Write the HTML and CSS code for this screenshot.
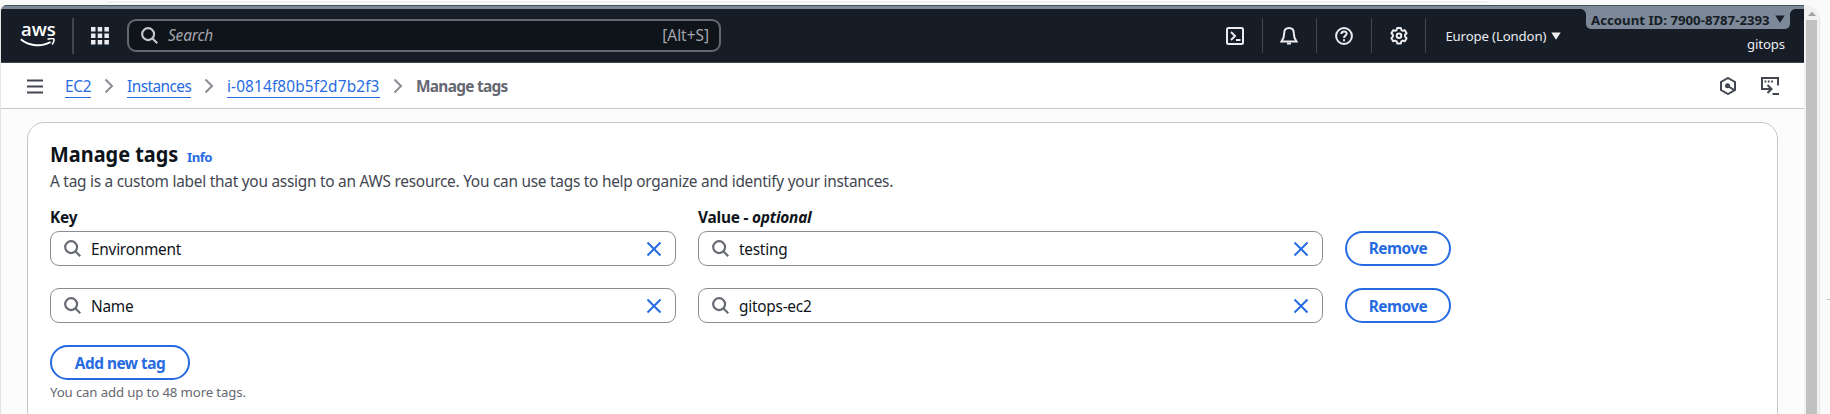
FILE: index.html
```
<!DOCTYPE html>
<html lang="en">
<head>
<meta charset="utf-8">
<title>Manage tags | EC2</title>
<link rel="stylesheet" href="styles.css">
</head>
<body>
<svg class="defs" width="0" height="0">
  <symbol id="search" viewBox="0 0 16 16"><circle cx="6.7" cy="6.7" r="5.6"/><path d="M10.8 10.8 15.3 15.3"/></symbol>
  <symbol id="close" viewBox="0 0 16 16"><path d="m1.5 1.5 13 13M14.5 1.5l-13 13"/></symbol>
  <symbol id="chevron" viewBox="0 0 10 16"><path d="m1.5 1.5 6.5 6.5-6.5 6.5"/></symbol>
  <symbol id="caret" viewBox="0 0 10 8"><path d="M.3 .5h9.4L5 7.7z"/></symbol>
</svg>
<div class="browser">
  <div class="toolbar"><div class="omnibox"></div></div>
  <div class="window">
    <div class="page">
      <header class="topnav">
        <div class="logo"><span class="logo-text">aws</span><svg width="36" height="9" viewBox="0 0 36 9"><path d="M.8 1.200C9 8.400 22 9 30.500 4" fill="none" stroke="#fff" stroke-width="2"/><path d="M27.500 1.300c3-.9 5.800-.9 6.300-.2.600.9-.3 4-1.800 5.400" fill="none" stroke="#fff" stroke-width="1.600"/></svg></div>
        <svg class="apps" width="18" height="18" viewBox="0 0 18 18"><path d="M0 0h4.500v4.500H0zM6.700 0h4.500v4.500H6.700zM13.400 0h4.500v4.500h-4.500zM0 6.500h4.500V11H0zM6.700 6.500h4.500V11H6.700zM13.400 6.500h4.500V11h-4.500zM0 13h4.500v4.500H0zM6.700 13h4.500v4.500H6.700zM13.400 13h4.500v4.500h-4.500z"/></svg>
        <div class="global-search">
          <svg class="icon" width="17" height="17"><use href="#search"/></svg>
          <span class="placeholder">Search</span><span class="shortcut">[Alt+S]</span>
        </div>
        <nav class="tools">
          <span class="tool"><svg width="18" height="18" viewBox="0 0 18 18"><rect x="1" y="1" width="16" height="16" rx="1.5"/><path d="m5 5 4 4-4 4M10 13h4.5"/></svg></span>
          <span class="tool"><svg width="18" height="18" viewBox="0 0 18 18"><path d="M9 1C5.800 1 4.200 3.300 4.200 6.200c0 4-.7 5.800-2.700 8.300h15c-2-2.500-2.700-4.300-2.700-8.300C13.800 3.300 12.200 1 9 1z"/><path d="M7 16.500h4"/></svg></span>
          <span class="tool"><svg width="18" height="18" viewBox="0 0 18 18"><circle cx="9" cy="9" r="7.900"/><path d="M6.300 7c.1-3.500 5.600-3.300 5.400-.2C11.600 8.700 9 8.600 9 11M9 12.300v1.900"/></svg></span>
          <span class="tool"><svg width="18" height="18" viewBox="0 0 18 18"><path d="m7.200 1h3.600l.6 2.100 1.300.7 2.100-.6 1.800 3-1.500 1.600v1.800l1.500 1.600-1.800 3-2.100-.6-1.300.7-.6 2.200H7.200l-.6-2.200-1.300-.7-2.100.6-1.800-3 1.500-1.600V7.800L1.400 6.200l1.800-3 2.100.6 1.300-.7z" stroke-linejoin="round"/><circle cx="9" cy="8.800" r="2.300"/></svg></span>
        </nav>
        <div class="region"><span>Europe (London)</span><svg width="10" height="8"><use href="#caret"/></svg></div>
        <div class="account"><div class="account-id"><span>Account ID: 7900-8787-2393</span><svg width="10" height="8"><use href="#caret"/></svg></div><div class="alias">gitops</div></div>
      </header>
      <div class="crumbbar">
        <svg class="menu" width="16" height="15" viewBox="0 0 16 15"><path d="M0 1.500h16M0 7.500h16M0 13.500h16"/></svg>
        <nav class="crumbs">
          <a class="c1">EC2</a><svg class="chev" width="10" height="16"><use href="#chevron"/></svg>
          <a class="c2">Instances</a><svg class="chev" width="10" height="16"><use href="#chevron"/></svg>
          <a class="c3">i-0814f80b5f2d7b2f3</a><svg class="chev" width="10" height="16"><use href="#chevron"/></svg>
          <b>Manage tags</b>
        </nav>
        <div class="side-tools">
          <svg width="18" height="18" viewBox="0 0 18 18"><path d="m9 1 7 4v8l-7 4-7-4V5z"/><circle cx="8.500" cy="8.800" r="1.500" fill="#424650"/><path d="m9 9 6 4"/></svg>
          <svg width="18" height="18" viewBox="0 0 18 18"><path d="M5.500 11.900H1V1h16v7.500M5 11.900h5M6.500 8l4 4-4 4M11.500 16.900H18"/><path d="M3.500 4.500h1.800M6.800 4.500h1.800M10.100 4.500h1.800" /></svg>
        </div>
      </div>
      <main class="card">
        <div class="title"><h1>Manage tags</h1><a>Info</a></div>
        <p class="desc">A tag is a custom label that you assign to an AWS resource. You can use tags to help organize and identify your instances.</p>
        <div class="tags">
          <label class="key-label">Key</label><label class="value-label">Value - <i>optional</i></label><span></span>
          <div class="field"><svg class="icon" width="17" height="17"><use href="#search"/></svg><span>Environment</span><svg class="clear" width="16" height="16"><use href="#close"/></svg></div>
          <div class="field"><svg class="icon" width="17" height="17"><use href="#search"/></svg><span>testing</span><svg class="clear" width="16" height="16"><use href="#close"/></svg></div>
          <button class="btn remove">Remove</button>
          <div class="field"><svg class="icon" width="17" height="17"><use href="#search"/></svg><span>Name</span><svg class="clear" width="16" height="16"><use href="#close"/></svg></div>
          <div class="field"><svg class="icon" width="17" height="17"><use href="#search"/></svg><span>gitops-ec2</span><svg class="clear" width="16" height="16"><use href="#close"/></svg></div>
          <button class="btn remove low">Remove</button>
        </div>
        <button class="btn add low">Add new tag</button>
        <p class="hint">You can add up to 48 more tags.</p>
      </main>
    </div>
    <div class="scrollbar"><svg width="8" height="5" viewBox="0 0 8 5"><path d="M0 5 4 .5 8 5z"/></svg><div class="thumb"></div></div>
  </div>
  <div class="handle"></div>
</div>
</body>
</html>
```
FILE: styles.css
```
* { box-sizing: border-box; }
body { margin: 0; background: #fafafa; font: 15.4px/22px "Noto Sans", sans-serif; color: #0f141a; overflow: hidden; }
svg { display: block; flex: none; fill: none; stroke: currentColor; stroke-width: 2; }
h1, p { margin: 0; }
.defs { position: absolute; }
.browser { width: 1830px; height: 414px; position: relative; overflow: hidden; }
.toolbar { height: 5px; padding-left: 107px; }
.omnibox { width: 1383px; height: 3px; background: #f1f1f1; border-top: 1px solid #fff; }
.window { width: 1820px; height: 420px; border: solid #e4e4e4; border-width: 0 1px; border-radius: 6px 16px 0 0; overflow: hidden; display: flex; }
.page { width: 1803px; flex: none; background: #fcfcfd; }
.topnav { height: 58px; background: linear-gradient(#424f5e 1px, #7d8998 1px, #7d8998 4px, #161d26 4px); padding-top: 4px; border-bottom: 1px solid #424650; display: flex; position: relative; color: #ebebf0; padding-left: 19px; }
.logo { width: 54px; height: 36px; margin-top: 9px; border-right: 2px solid #424650; color: #fff; flex: none; }
.logo-text { display: block; font: 600 18.500px/20px "Open Sans", sans-serif; height: 20px; padding: 1px 0 0 1px; }
.apps { margin: 18px 18px 0 17px; fill: #ebebf0; stroke: none; }
.global-search { width: 594px; height: 33px; margin-top: 10px; border: 2px solid #656871; border-radius: 9px; background: #0f141a; display: flex; align-items: center; padding: 0 9px 0 12px; color: #a4a4ad; }
.global-search .icon { color: #c6c6cd; margin-right: 10px; }
.placeholder { font-style: italic; letter-spacing: -.15px; }
.shortcut { margin-left: auto; margin-right: 1px; }
.tools { display: flex; margin: 9px 0 0 487px; height: 35px; }
.tool { width: 54.600px; display: grid; place-items: center; border-right: 1px solid #424650; }
.region { display: flex; align-items: center; height: 22px; margin: 16px 0 0 19px; font-size: 13.200px; white-space: nowrap; gap: 7px; }
.region span { letter-spacing: -.13px; width: 99px; }
.region svg, .account svg { fill: currentColor; stroke: none; }
.account { position: absolute; top: 4px; right: 14px; width: 204px; }
.account-id { height: 20px; border-radius: 0 0 5px 5px; background: #7d8998; color: #161d26; font-weight: 700; font-size: 13.200px; letter-spacing: .02px; display: flex; align-items: center; gap: 5px; padding-left: 5px; white-space: nowrap; line-height: 22px; }
.account-id span { padding-top: 1px; }
.account-id::before, .account-id::after { content: ""; position: absolute; top: 0; width: 5px; height: 5px; }
.account-id::before { left: -5px; background: radial-gradient(circle at 0 100%, transparent 4.500px, #7d8998 5px); }
.account-id::after { right: -5px; background: radial-gradient(circle at 100% 100%, transparent 4.500px, #7d8998 5px); }
.alias { text-align: right; font-size: 13.200px; letter-spacing: -.1px; padding: 4px 5px 0 0; }
.crumbbar { height: 46px; background: #fff; border-bottom: 1px solid #c6c6cd; display: flex; align-items: center; padding: 1px 25px 0 26px; }
.menu { color: #424650; }
.crumbs { display: flex; align-items: center; margin-left: 22px; white-space: nowrap; color: #656871; }
.crumbs a { color: #276be2; border-bottom: 1px solid #276be2; line-height: 20px; margin-top: 2px; }
.crumbs b { padding-top: 1px; letter-spacing: -.7px; }
.c1 { width: 26px; letter-spacing: -.3px; }
.c2 { width: 64px; letter-spacing: -.55px; }
.c3 { width: 153px; letter-spacing: .13px; }
.chev { color: #8c8c94; margin: 0 13px; }
.side-tools { margin-left: auto; display: flex; gap: 24px; color: #424650; }
.card { width: 1751px; height: 307px; margin: 13px 0 0 26px; background: #fff; border: 1px solid #c6c6cd; border-radius: 17px; padding: 16px 22px; }
.title { display: flex; height: 28px; align-items: baseline; gap: 10px; }
h1 { font-size: 22px; line-height: 28px; width: 127px; white-space: nowrap; transform: scaleX(.905); transform-origin: left; }
.title a { font-size: 13.200px; font-weight: 700; color: #276be2; letter-spacing: -.5px; }
.desc { color: #424650; line-height: 22px; margin-top: 4px; letter-spacing: -.25px; }
.tags { display: grid; grid-template-columns: 626px 625px 106px; column-gap: 22px; row-gap: 22px; margin-top: 14px; }
.tags label { font-weight: 700; height: 22px; margin-bottom: -20px; letter-spacing: -.2px; }
.value-label { white-space: nowrap; }
.field { height: 35px; border: 1px solid #8c8c94; border-radius: 9px; display: flex; align-items: center; padding: 0 13px 0 13px; letter-spacing: -.25px; }
.field span { padding-top: 2px; }
.field .icon { color: #656871; margin-right: 10px; }
.clear { margin-left: auto; color: #276be2; }
.btn { height: 35px; border: 2px solid #276be2; border-radius: 20px; background: #fff; color: #276be2; font: 700 15.400px/22px "Noto Sans", sans-serif; padding: 0; white-space: nowrap; letter-spacing: -.5px; }
.low { padding-top: 2px; }
.add { width: 140px; margin-top: 22px; display: block; }
.hint { color: #656871; font-size: 13.200px; line-height: 18px; margin-top: 3px; letter-spacing: -.12px; }
.scrollbar { flex: 1; background: #f1f1f1; padding: 6px 2px 0; }
.scrollbar svg { margin: 0 auto; fill: #a3a3a3; stroke: none; }
.thumb { margin-top: 4px; height: 410px; width: 11px; background: #c1c1c1; }
.handle { position: absolute; right: 0; top: 299px; width: 3px; height: 1px; background: #c1c1c1; }
```
